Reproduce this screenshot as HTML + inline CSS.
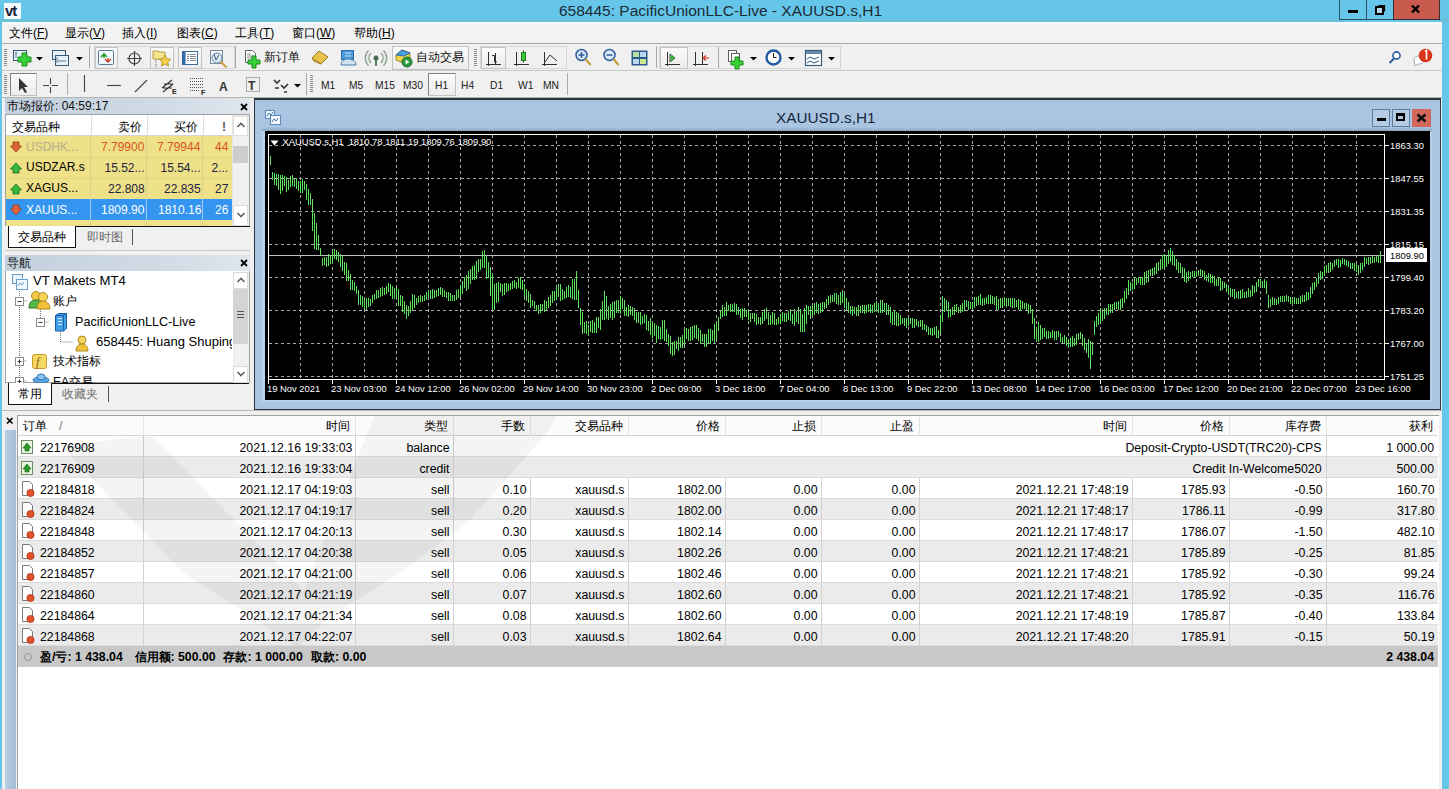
<!DOCTYPE html>
<html><head><meta charset="utf-8">
<style>
*{box-sizing:border-box}
html,body{margin:0;padding:0}
body{width:1449px;height:789px;overflow:hidden;position:relative;background:#f0f0f0;font-family:"Liberation Sans",sans-serif;font-size:12px;color:#000}
.a{position:absolute}
.ct{position:absolute;color:#fff;font-size:9.4px;line-height:12px;white-space:nowrap}
.t{position:absolute;white-space:nowrap;line-height:14px}
</style></head><body>
<!-- title bar -->
<div class="a" style="left:0;top:0;width:1449px;height:22px;background:#66c6ea"></div>
<div class="a" style="left:0;top:22px;width:2px;height:767px;background:#66c6ea"></div>
<div class="a" style="left:1442px;top:22px;width:7px;height:767px;background:#66c6ea"></div>
<div class="a" style="left:4px;top:3px;width:17px;height:16px;background:#f4fbff"></div>
<div class="t" style="left:5px;top:3.5px;font-weight:bold;font-size:15px;color:#1a1f3a;letter-spacing:-1px">vt</div>
<div class="t" style="left:559px;top:2px;font-size:15.5px;line-height:17px;color:#1d2b36">658445: PacificUnionLLC-Live - XAUUSD.s,H1</div>
<div class="a" style="left:1339px;top:0;width:28px;height:20px;border:1px solid #2a4d63;border-top:none"></div>
<div class="a" style="left:1367px;top:0;width:27px;height:20px;border:1px solid #2a4d63;border-top:none;border-left:none"></div>
<div class="a" style="left:1393px;top:0;width:47px;height:20px;background:#c85a4d;border:1px solid #3a3030;border-top:none"></div>
<div class="a" style="left:1348px;top:10px;width:10px;height:3px;background:#000"></div>
<svg class="a" style="left:1339px;top:0" width="102" height="22">
<path d="M39.5 5.5h6v6" fill="none" stroke="#000" stroke-width="1.2"/>
<rect x="37" y="7" width="7" height="7" fill="#b8dcea" stroke="#000" stroke-width="2"/>
<path d="M73 5.5l7 7M80 5.5l-7 7" stroke="#000" stroke-width="2.4"/>
</svg>

<!-- menu -->
<div class="a" style="left:2px;top:22px;width:1440px;height:21px;background:#f2f2f2"></div>
<div class="a" style="left:2px;top:43px;width:1440px;height:1px;background:#a9a9a9"></div>
<div class="a" style="left:2px;top:44px;width:1440px;height:1px;background:#fff"></div>
<div class="a" style="left:0;top:19px;width:1339px;height:3px;background:#6bc2d6"></div>
<div class="a" style="left:1440px;top:19px;width:9px;height:3px;background:#6bc2d6"></div>
<div class="a" style="left:2px;top:22px;width:1440px;height:2px;background:#f6fbfd"></div>
<div class="t" style="left:9px;top:26px">文件(<u>F</u>)</div>
<div class="t" style="left:65px;top:26px">显示(<u>V</u>)</div>
<div class="t" style="left:122px;top:26px">插入(<u>I</u>)</div>
<div class="t" style="left:177px;top:26px">图表(<u>C</u>)</div>
<div class="t" style="left:235px;top:26px">工具(<u>T</u>)</div>
<div class="t" style="left:292px;top:26px">窗口(<u>W</u>)</div>
<div class="t" style="left:354px;top:26px">帮助(<u>H</u>)</div>
<!-- toolbar rows -->
<div class="a" style="left:2px;top:44px;width:1440px;height:26px;background:#f0f0f0"></div>
<div class="a" style="left:2px;top:70px;width:1440px;height:1px;background:#c8c8c8"></div>
<div class="a" style="left:2px;top:71px;width:1440px;height:26px;background:#f0f0f0"></div>
<div class="a" style="left:2px;top:97px;width:1440px;height:1px;background:#b4b4b4"></div>

<svg class="a" style="left:0;top:0" width="1449" height="98">
<defs>
<linearGradient id="gbtn" x1="0" y1="0" x2="0" y2="1"><stop offset="0" stop-color="#fbfbfb"/><stop offset="1" stop-color="#ececec"/></linearGradient>
</defs>
<!-- grips -->
<g stroke="#8a8a8a" stroke-width="1">
<path d="M4 49.5h3M4 51.5h3M4 53.5h3M4 55.5h3M4 57.5h3M4 59.5h3M4 61.5h3M4 63.5h3M4 65.5h3"/>
<path d="M4 75.5h3M4 77.5h3M4 79.5h3M4 81.5h3M4 83.5h3M4 85.5h3M4 87.5h3M4 89.5h3M4 91.5h3M4 93.5h3"/>
<path d="M474 49.5h3M474 51.5h3M474 53.5h3M474 55.5h3M474 57.5h3M474 59.5h3M474 61.5h3M474 63.5h3M474 65.5h3"/>
<path d="M310 75.5h3M310 77.5h3M310 79.5h3M310 81.5h3M310 83.5h3M310 85.5h3M310 87.5h3M310 89.5h3M310 91.5h3"/>
</g>
<!-- separators -->
<g stroke="#a8a8a8">
<path d="M89.5 46V68M235.5 46V68M566.5 46V68M656.5 46V68M718.5 46V68M67.5 73V95M306.5 73V95M567.5 73V95M840.5 46V69"/>
</g>
<!-- group borders (light) -->
<g fill="none" stroke="#d6d6d6">
<rect x="94.5" y="46.5" width="140" height="22"/>
<rect x="480.5" y="46.5" width="86" height="22"/>
<rect x="659.5" y="46.5" width="181" height="22"/>
</g>
<!-- active buttons -->
<g fill="url(#gbtn)" stroke="#c2c2c2">
<rect x="95.5" y="47.5" width="22" height="21"/>
<rect x="150.5" y="47.5" width="23" height="21"/>
<rect x="178.5" y="47.5" width="23" height="21"/>
<rect x="392.5" y="46.5" width="76" height="23"/>
<rect x="481.5" y="47.5" width="24" height="21"/>
<rect x="660.5" y="47.5" width="27" height="21"/>
<rect x="10.5" y="73.5" width="26" height="22"/>
<rect x="428.5" y="73.5" width="27" height="22"/>
</g>
<g stroke="#808080" fill="none"><path d="M10.5 95.5V73.5H36.5M428.5 95.5V73.5H455.5"/></g>
<!-- new chart -->
<rect x="13.5" y="50.5" width="13" height="10" fill="#e6f0f8" stroke="#3a5a78"/>
<path d="M16 52v6M15 53h2" stroke="#5a7a98"/>
<path d="M22 53h5v4h4v5h-4v4h-5v-4h-4v-5h4z" fill="#38d038" stroke="#1a8a1a"/>
<path d="M36 57h7l-3.5 3.5z" fill="#000"/>
<!-- profiles -->
<rect x="52.5" y="50.5" width="13" height="9" fill="#e6f0f8" stroke="#3a5a78"/>
<rect x="55.5" y="55.5" width="13" height="10" fill="#e6f0f8" stroke="#3a5a78"/>
<path d="M57 57v6M58 61h8" stroke="#5a7a98"/>
<path d="M76 57h7l-3.5 3.5z" fill="#000"/>
<!-- market watch -->
<rect x="98.5" y="50.5" width="15" height="14" rx="1" fill="#f0f8ff" stroke="#5a7898"/>
<path d="M101 57l3-3 3 3M104 54v4" stroke="#2a9a2a" stroke-width="1.6" fill="none"/>
<path d="M105 59l3 3 3-3M108 62v-4" stroke="#d04030" stroke-width="1.4" fill="none"/>
<!-- crosshair -->
<circle cx="134.5" cy="58.5" r="5.5" fill="none" stroke="#404040" stroke-width="1.2"/>
<path d="M134.5 51V66M127 58.5H142" stroke="#404040" stroke-width="1.2"/>
<!-- navigator folder star -->
<path d="M153 51h5l1 1h6v7h-12z" fill="#f5e58a" stroke="#b09a40"/>
<path d="M165 55l1.8 3.8 4 .5-3 2.8.8 4-3.6-2-3.6 2 .8-4-3-2.8 4-.5z" fill="#f5d24a" stroke="#b08a20" stroke-width="0.8"/>
<path d="M156 60v7" stroke="#555" stroke-dasharray="1,1"/>
<!-- terminal -->
<rect x="182.5" y="51.5" width="15" height="13" fill="#fff" stroke="#3a6a9a"/>
<rect x="182.5" y="51.5" width="3" height="13" fill="#2f6aa8"/>
<path d="M187 54.5h2M187 56.5h2M187 58.5h2M187 60.5h2M190 54.5h6M190 56.5h6M190 58.5h6M190 60.5h6" stroke="#5a6a7a" stroke-width="0.8"/>
<!-- tester -->
<rect x="210.5" y="50.5" width="12" height="13" fill="#f6f9fc" stroke="#7a8a9a"/>
<circle cx="217" cy="58" r="5" fill="#dbe8f5" stroke="#6a8aa8"/>
<path d="M214 54l2 6 3-5" stroke="#4a5a7a" fill="none"/>
<path d="M220.5 61.5l6 6" stroke="#d0a040" stroke-width="2"/>
<!-- new order -->
<path d="M245.5 50.5h7l3 3v9h-10z" fill="#fff" stroke="#606060"/>
<path d="M247 54h4M247 56h6M247 58h6" stroke="#909090"/>
<path d="M252 56h4v4h4v4h-4v4h-4v-4h-4v-4h4z" fill="#38d038" stroke="#1a8a1a"/>
<!-- metaeditor -->
<path d="M312 58l7-7 9 6-7 7z" fill="#e8c24a" stroke="#9a7a20"/>
<path d="M312 58l2 3 7 3" stroke="#9a7a20" fill="#d4a830"/>
<!-- person blue -->
<rect x="341.5" y="50.5" width="12" height="9" fill="#4a98d8" stroke="#2a6aa8"/>
<path d="M341 65c0-4 3-6 7-6s8 2 8 6z" fill="#cfe2f2" stroke="#4a78a8"/>
<path d="M345 53h6M345 56h6" stroke="#cfe8ff"/>
<!-- signals -->
<circle cx="376" cy="58" r="2.5" fill="#4a6a5a"/>
<path d="M371 53a7 7 0 0 0 0 10M381 53a7 7 0 0 1 0 10M368.5 50.5a10.5 10.5 0 0 0 0 15M383.5 50.5a10.5 10.5 0 0 1 0 15" stroke="#8aa08a" stroke-width="1.3" fill="none"/>
<path d="M376 60v6" stroke="#4a8a5a" stroke-width="2"/>
<!-- auto trading -->
<path d="M396 55l6-5 8 3v6l-6 4-8-3z" fill="#f2d54a" stroke="#a08a20"/>
<path d="M396 55l6-5 8 3-6 3z" fill="#4aa0d8" stroke="#2a6aa8"/>
<circle cx="407" cy="62" r="5" fill="#2a9a3a" stroke="#1a6a2a"/>
<path d="M405.5 59.5v5l4-2.5z" fill="#fff"/>
<!-- bar chart -->
<path d="M488.5 52v14M486 64.5h15M492 55.5h2.5V62H497M495.5 53v11" stroke="#303030" fill="none"/>
<!-- candles -->
<path d="M516.5 52v14M514 64.5h15" stroke="#303030" fill="none"/>
<path d="M523.5 50.5v12" stroke="#303030"/>
<rect x="521.5" y="52.5" width="4" height="8" fill="#38c838" stroke="#1a7a1a"/>
<!-- line chart -->
<path d="M544.5 52v14M542 64.5h15M545 62l5-7 7 6" stroke="#303030" fill="none"/>
<!-- zoom in/out -->
<circle cx="581.5" cy="55" r="5.5" fill="#dcecf8" stroke="#2a5a9a" stroke-width="1.5"/>
<path d="M578.5 55h6M581.5 52v6" stroke="#2a5a9a" stroke-width="1.5"/>
<path d="M585.5 59l5 6" stroke="#c8a040" stroke-width="2.2"/>
<circle cx="609.5" cy="55" r="5.5" fill="#dcecf8" stroke="#2a5a9a" stroke-width="1.5"/>
<path d="M606.5 55h6" stroke="#2a5a9a" stroke-width="1.5"/>
<path d="M613.5 59l5 6" stroke="#c8a040" stroke-width="2.2"/>
<!-- tile -->
<rect x="631.5" y="50.5" width="16" height="15" fill="#2a5a8a"/>
<rect x="633" y="52" width="6" height="5" fill="#b8e0a0"/><rect x="640" y="52" width="6" height="5" fill="#b8d8f0"/>
<rect x="633" y="59" width="6" height="5" fill="#b8d8f0"/><rect x="640" y="59" width="6" height="5" fill="#d0e890"/>
<!-- autoscroll -->
<path d="M667.5 52v14M665 64.5h15M670 54v8l5-4z" stroke="#303030" fill="none"/>
<path d="M670.5 54.5v7l4.5-3.5z" fill="#38b838"/>
<!-- chart shift -->
<path d="M695.5 52v14M693 64.5h15M702.5 52v12" stroke="#303030" fill="none"/>
<path d="M709 58h-5M706 55.5l-3 2.5 3 2.5" stroke="#c83020" stroke-width="1.2" fill="none"/>
<!-- indicators -->
<rect x="728.5" y="50.5" width="8" height="11" fill="#fff" stroke="#606060"/>
<rect x="731.5" y="53.5" width="8" height="11" fill="#fff" stroke="#606060"/>
<path d="M735 57h4v4h4v4h-4v4h-4v-4h-4v-4h4z" fill="#38d038" stroke="#1a8a1a"/>
<path d="M750 57h7l-3.5 3.5z" fill="#000"/>
<!-- clock -->
<circle cx="773.5" cy="57.5" r="7" fill="#fff" stroke="#1f5aa0" stroke-width="2.4"/>
<path d="M773.5 53v4.5h3" stroke="#222" fill="none"/>
<path d="M788 57h7l-3.5 3.5z" fill="#000"/>
<!-- templates -->
<rect x="805.5" y="50.5" width="16" height="15" fill="#fff" stroke="#3a5a7a" stroke-width="1.2"/>
<rect x="806" y="51" width="15" height="3" fill="#6a8aaa"/>
<path d="M807 59l3-2 4 2 5-2M807 63l3-2 4 2 5-2" stroke="#2a5a8a" fill="none"/>
<path d="M828 57h7l-3.5 3.5z" fill="#000"/>
<!-- search + notifications -->
<circle cx="1396.5" cy="55.5" r="3.6" fill="#fff" stroke="#2a5aa8" stroke-width="1.6"/>
<path d="M1394 58.5l-4.5 4.5" stroke="#2a5aa8" stroke-width="2"/>
<path d="M1414 60a5 4 0 1 1 4 4l-3 2z" fill="#fff" stroke="#9aaaba"/>
<circle cx="1425.5" cy="55.5" r="6.8" fill="#d8351a"/>
<path d="M1425 51.5l1.5-1v9" stroke="#fff" stroke-width="1.6" fill="none"/>
<!-- row 2 tools -->
<path d="M19 78v13l3-3 3 5 2-1-3-5h4z" fill="#333"/>
<path d="M50.5 78V84M50.5 87V93M43 85.5H49M52 85.5H58" stroke="#444" stroke-width="1.1"/>
<path d="M84.5 75V92" stroke="#444" stroke-width="1.1"/>
<path d="M107 85.5H121" stroke="#444" stroke-width="1.1"/>
<path d="M135 92l12-12" stroke="#444" stroke-width="1.1"/>
<path d="M162 88l10-8M163 92l10-8M164 84h9M163 88h9" stroke="#333" stroke-width="1.2"/>
<text x="172" y="94" font-size="7" font-family="Liberation Sans" font-weight="bold" fill="#222">E</text>
<g stroke="#555" stroke-dasharray="1,1"><path d="M190 78.5h13M190 81.5h13M190 84.5h13M190 87.5h13M190 90.5h10"/></g>
<text x="201" y="95" font-size="7" font-family="Liberation Sans" font-weight="bold" fill="#222">F</text>
<text x="219" y="91" font-size="12" font-family="Liberation Sans" font-weight="bold" fill="#333">A</text>
<rect x="246.5" y="77.5" width="13" height="14" fill="none" stroke="#666" stroke-dasharray="1,1"/>
<text x="248" y="90" font-size="12" font-family="Liberation Sans" font-weight="bold" fill="#333">T</text>
<path d="M274 80l3 3 3-3M281 85l3 3 4-4" stroke="#333" stroke-width="1.6" fill="none"/>
<path d="M275 88h4M284 92h3" stroke="#333" stroke-width="1.5"/>
<path d="M294 84h7l-3.5 3.5z" fill="#000"/>
</svg>
<div class="t" style="left:264px;top:50px;font-size:12px;color:#111">新订单</div>
<div class="t" style="left:416px;top:50px;font-size:12px;color:#111">自动交易</div>
<div class="t" style="left:321px;top:79px;font-size:10.3px;color:#222">M1</div>
<div class="t" style="left:349px;top:79px;font-size:10.3px;color:#222">M5</div>
<div class="t" style="left:375px;top:79px;font-size:10.3px;color:#222">M15</div>
<div class="t" style="left:403px;top:79px;font-size:10.3px;color:#222">M30</div>
<div class="t" style="left:435px;top:79px;font-size:10.3px;color:#222">H1</div>
<div class="t" style="left:461px;top:79px;font-size:10.3px;color:#222">H4</div>
<div class="t" style="left:490px;top:79px;font-size:10.3px;color:#222">D1</div>
<div class="t" style="left:518px;top:79px;font-size:10.3px;color:#222">W1</div>
<div class="t" style="left:543px;top:79px;font-size:10.3px;color:#222">MN</div>


<!-- market watch -->
<div class="a" style="left:5px;top:98px;width:245px;height:16px;background:linear-gradient(90deg,#c3d0dd 0%,#cfdae5 60%,#dfe6ed 100%)"></div>
<div class="t" style="left:7px;top:99px;font-size:12px;line-height:14px;color:#111">市场报价: 04:59:17</div>
<svg class="a" style="left:240px;top:103px" width="8" height="8"><path d="M1 1l6 6M7 1L1 7" stroke="#000" stroke-width="1.8"/></svg>
<div class="a" style="left:5px;top:114px;width:245px;height:113px;background:#fff;border:1px solid #a0a0a0"></div>
<div class="a" style="left:6px;top:115px;width:226px;height:21px;background:#fff;border-bottom:1px solid #d4d4d4"></div>
<div class="a" style="left:91px;top:115px;width:1px;height:21px;background:#e0e0e0"></div>
<div class="a" style="left:147px;top:115px;width:1px;height:21px;background:#e0e0e0"></div>
<div class="a" style="left:203px;top:115px;width:1px;height:21px;background:#e0e0e0"></div>
<div class="t" style="left:12px;top:119.5px">交易品种</div>
<div class="t" style="left:118px;top:119.5px">卖价</div>
<div class="t" style="left:174px;top:119.5px">买价</div>
<div class="t" style="left:222px;top:119.5px;color:#555;font-weight:bold">!</div>
<div class="a" style="left:6px;top:136px;width:226px;height:63px;background:#efe187"></div>
<div class="a" style="left:6px;top:220px;width:226px;height:6px;background:#efe187"></div>
<div class="a" style="left:6px;top:157px;width:226px;height:1px;background:#e2d489"></div>
<div class="a" style="left:6px;top:178px;width:226px;height:1px;background:#e2d489"></div>

<div class="a" style="left:90px;top:136px;width:1px;height:90px;background:#d9cf90"></div>
<div class="a" style="left:146px;top:136px;width:1px;height:90px;background:#d9cf90"></div>
<div class="a" style="left:202px;top:136px;width:1px;height:90px;background:#d9cf90"></div>
<div class="a" style="left:6px;top:199px;width:226px;height:21px;background:#3395ef"></div>
<div class="a" style="left:90px;top:199px;width:1px;height:21px;background:#9ccaf5"></div>
<div class="a" style="left:146px;top:199px;width:1px;height:21px;background:#9ccaf5"></div>
<div class="a" style="left:202px;top:199px;width:1px;height:21px;background:#9ccaf5"></div>
<!-- rows -->
<svg class="a" style="left:10px;top:141px" width="12" height="12"><path d="M3 1h6v4h2.5L6 11 0.5 5H3z" fill="#e2633a" stroke="#9a3a1a" stroke-width="0.8"/></svg>
<div class="t" style="left:26px;top:140px;color:#b3ad8e">USDHK...</div>
<div class="t" style="left:101px;top:140px;color:#d9531c">7.79900</div>
<div class="t" style="left:157px;top:140px;color:#d9531c">7.79944</div>
<div class="t" style="left:215px;top:140px;color:#d9531c">44</div>
<svg class="a" style="left:10px;top:162px" width="12" height="12"><path d="M3 11h6V7h2.5L6 1 0.5 7H3z" fill="#36b83a" stroke="#1a6a1a" stroke-width="0.8"/></svg>
<div class="t" style="left:26px;top:160px">USDZAR.s</div>
<div class="t" style="left:104.5px;top:161px;color:#232345">15.52...</div>
<div class="t" style="left:160.5px;top:161px;color:#232345">15.54...</div>
<div class="t" style="left:211.5px;top:161px;color:#232345">2...</div>
<svg class="a" style="left:10px;top:183px" width="12" height="12"><path d="M3 11h6V7h2.5L6 1 0.5 7H3z" fill="#36b83a" stroke="#1a6a1a" stroke-width="0.8"/></svg>
<div class="t" style="left:26px;top:181px">XAGUS...</div>
<div class="t" style="left:108px;top:182px;color:#232345">22.808</div>
<div class="t" style="left:164px;top:182px;color:#232345">22.835</div>
<div class="t" style="left:215px;top:182px;color:#232345">27</div>
<svg class="a" style="left:10px;top:204px" width="12" height="12"><path d="M3 1h6v4h2.5L6 11 0.5 5H3z" fill="#e2633a" stroke="#9a3a1a" stroke-width="0.8"/></svg>
<div class="t" style="left:26px;top:203px;color:#fff">XAUUS...</div>
<div class="t" style="left:101px;top:203px;color:#fff">1809.90</div>
<div class="t" style="left:158px;top:203px;color:#fff">1810.16</div>
<div class="t" style="left:215px;top:203px;color:#fff">26</div>
<!-- scrollbar -->
<div class="a" style="left:232px;top:115px;width:17px;height:111px;background:#f0f0f0;border-left:1px solid #e6e6e6"></div>
<div class="a" style="left:233px;top:116px;width:15px;height:20px;background:#fff;border:1px solid #dcdcdc"></div>
<svg class="a" style="left:236px;top:120px" width="10" height="10"><path d="M1.5 7L5 3.5 8.5 7" stroke="#606060" stroke-width="1.6" fill="none"/></svg>
<div class="a" style="left:233px;top:146px;width:15px;height:17px;background:#cdcdcd"></div>
<div class="a" style="left:233px;top:205px;width:15px;height:21px;background:#fff;border:1px solid #dcdcdc"></div>
<svg class="a" style="left:236px;top:210px" width="10" height="10"><path d="M1.5 3L5 6.5 8.5 3" stroke="#606060" stroke-width="1.6" fill="none"/></svg>
<!-- tabs -->
<div class="a" style="left:5px;top:226px;width:245px;height:24px;background:#f0f0f0"></div>
<div class="a" style="left:75px;top:226px;width:175px;height:1px;background:#111"></div>
<div class="a" style="left:8px;top:226px;width:68px;height:22px;background:#fff;border:1px solid #111;border-top:none"></div>
<div class="t" style="left:18px;top:230px">交易品种</div>
<div class="t" style="left:87px;top:230px;color:#6a6a6a">即时图</div>
<div class="a" style="left:132px;top:229px;width:1px;height:16px;background:#555"></div>
<div class="a" style="left:5px;top:250px;width:245px;height:1px;background:#c9c9c9"></div>

<!-- navigator -->
<div class="a" style="left:5px;top:255px;width:245px;height:16px;background:linear-gradient(90deg,#c3d0dd 0%,#cfdae5 60%,#dfe6ed 100%)"></div>
<div class="t" style="left:7px;top:256px;font-size:12px;line-height:14px;color:#111">导航</div>
<svg class="a" style="left:240px;top:259px" width="8" height="8"><path d="M1 1l6 6M7 1L1 7" stroke="#000" stroke-width="1.8"/></svg>
<div class="a" style="left:5px;top:271px;width:245px;height:112px;background:#fff;border:1px solid #a0a0a0;border-top:none"></div>
<div class="a" style="left:233px;top:272px;width:16px;height:111px;background:#f0f0f0"></div>
<div class="a" style="left:233px;top:272px;width:15px;height:17px;background:#fff;border:1px solid #dcdcdc"></div>
<svg class="a" style="left:236px;top:275px" width="10" height="10"><path d="M1.5 7L5 3.5 8.5 7" stroke="#606060" stroke-width="1.6" fill="none"/></svg>
<div class="a" style="left:233px;top:289px;width:15px;height:55px;background:#d4d4d4"></div>
<div class="a" style="left:237px;top:311px;width:7px;height:1px;background:#555"></div>
<div class="a" style="left:237px;top:314px;width:7px;height:1px;background:#555"></div>
<div class="a" style="left:237px;top:317px;width:7px;height:1px;background:#555"></div>
<div class="a" style="left:233px;top:366px;width:15px;height:17px;background:#fff;border:1px solid #dcdcdc"></div>
<svg class="a" style="left:236px;top:369px" width="10" height="10"><path d="M1.5 3L5 6.5 8.5 3" stroke="#606060" stroke-width="1.6" fill="none"/></svg>
<!-- tree -->
<svg class="a" style="left:5px;top:271px" width="228" height="112">
<g stroke="#707070" stroke-dasharray="1,1" fill="none">
<path d="M14.5 18V112M14.5 30H22M35.5 38V54M35.5 51H44M55.5 58V71M55.5 71H68M14.5 90H22M14.5 110H22"/>
</g>
<rect x="10.5" y="26.5" width="8" height="8" fill="#fff" stroke="#8c8c8c"/><path d="M12.5 30.5h4" stroke="#333"/>
<rect x="31.5" y="47.5" width="8" height="8" fill="#fff" stroke="#8c8c8c"/><path d="M33.5 51.5h4" stroke="#333"/>
<rect x="10.5" y="86.5" width="8" height="8" fill="#fff" stroke="#8c8c8c"/><path d="M12.5 90.5h4M14.5 88.5v4" stroke="#333"/>
<rect x="10.5" y="106.5" width="8" height="8" fill="#fff" stroke="#8c8c8c"/><path d="M12.5 110.5h4M14.5 108.5v4" stroke="#333"/>
<!-- VT icon -->
<rect x="7.5" y="3.5" width="10" height="9" fill="#e9f3fb" stroke="#6aa0cc"/>
<rect x="11.5" y="8.5" width="11" height="10" fill="#f3f9ff" stroke="#6aa0cc"/>
<path d="M13 15l2-3 2 2 2-3" stroke="#6aa0cc" fill="none"/>
<!-- accounts icon -->
<circle cx="31" cy="25" r="4.5" fill="#f2c94a" stroke="#b08a20"/>
<path d="M24 37c0-6 3-8 7-8s7 2 7 8z" fill="#52b848" stroke="#2a7a2a"/>
<circle cx="38" cy="26" r="4.5" fill="#f5d35a" stroke="#b08a20"/>
<path d="M32 38c0-6 3-8 6-8s7 2 7 8z" fill="#f0c23a" stroke="#b08a20"/>
<!-- server icon -->
<path d="M50.5 44.5l3-2h8v15l-3 2.5h-8z" fill="#3f9ee6" stroke="#1f5f9f"/>
<path d="M50.5 44.5h8v15M58.5 44.5l3-2" fill="none" stroke="#1f5f9f"/>
<path d="M53 47.5h4M53 50.5h4M53 53.5h4" stroke="#d6ecff"/>
<!-- person icon -->
<circle cx="77" cy="69" r="4" fill="#f5d35a" stroke="#b08a20"/>
<path d="M71 80c0-5 3-7 6-7s6 2 6 7z" fill="#f0c23a" stroke="#b08a20"/>
<!-- indicators icon -->
<rect x="27.5" y="83.5" width="14" height="14" rx="2" fill="#f6d860" stroke="#c39a2a"/>
<text x="31" y="95" font-family="Liberation Serif" font-style="italic" font-size="12" fill="#8a5a10">f</text>
<!-- EA icon -->
<ellipse cx="36" cy="109" rx="8" ry="3" fill="#5aa8e6" stroke="#2f6fb0"/><ellipse cx="36" cy="106" rx="4" ry="3" fill="#8cc8f2" stroke="#2f6fb0"/>
</svg>
<div class="t" style="left:33px;top:274px;font-size:13.2px">VT Makets MT4</div>
<div class="t" style="left:53px;top:294px">账户</div>
<div class="t" style="left:75px;top:315px;font-size:12.6px">PacificUnionLLC-Live</div>
<div class="a" style="left:96px;top:334px;width:136px;height:16px;overflow:hidden"><div class="t" style="left:0;top:1px;font-size:13px">658445: Huang Shuping</div></div>
<div class="t" style="left:53px;top:354px">技术指标</div>
<div class="a" style="left:53px;top:374px;width:60px;height:9px;overflow:hidden"><div class="t" style="left:0;top:1px">EA交易</div></div>
<!-- nav tabs -->
<div class="a" style="left:5px;top:383px;width:245px;height:27px;background:#f0f0f0"></div>
<div class="a" style="left:51px;top:383px;width:198px;height:1px;background:#111"></div>
<div class="a" style="left:8px;top:383px;width:44px;height:22px;background:#fff;border:1px solid #111;border-top:none"></div>
<div class="t" style="left:18px;top:387px">常用</div>
<div class="t" style="left:62px;top:387px;color:#6a6a6a">收藏夹</div>
<div class="a" style="left:108px;top:386px;width:1px;height:16px;background:#555"></div>
<div class="a" style="left:2px;top:410px;width:1440px;height:1px;background:#b8b8b8"></div>


<div class="a" style="left:254px;top:98px;width:1187px;height:312px;background:#a9c5e1;border:1px solid #2d3640;border-top:2px solid #2d3640"></div>
<div class="a" style="left:262px;top:130px;width:1170px;height:272px;background:#b9d1e8"></div>
<div class="t" style="left:776px;top:109px;font-size:15.3px;line-height:18px;color:#16263a">XAUUSD.s,H1</div>
<svg class="a" style="left:264px;top:109px" width="20" height="18" viewBox="0 0 20 18">
<rect x="1.5" y="1.5" width="9" height="8" fill="#e8f2fc" stroke="#5d8ab8"/>
<rect x="6.5" y="6.5" width="10" height="9" fill="#f4f9ff" stroke="#5d8ab8"/>
<path d="M3 7l2-3 2 2 2-3M8 13l2-3 2 2 2-3" stroke="#4a78a8" fill="none"/>
</svg>
<div class="a" style="left:1372px;top:109px;width:18px;height:18px;border:1px solid #5f7c99;background:#b3cbe3"></div>
<div class="a" style="left:1377px;top:118px;width:9px;height:3px;background:#000"></div>
<div class="a" style="left:1392px;top:109px;width:18px;height:18px;border:1px solid #5f7c99;background:#b3cbe3"></div>
<div class="a" style="left:1396px;top:113px;width:9px;height:8px;border:2px solid #000;border-top-width:3px"></div>
<div class="a" style="left:1412px;top:109px;width:19px;height:18px;background:#d2685a"></div>
<svg class="a" style="left:1412px;top:109px" width="19" height="18"><path d="M5.5 5.5l8 7M13.5 5.5l-8 7" stroke="#111" stroke-width="2.6"/></svg>
<div class="a" style="left:262px;top:127px;width:1170px;height:4px;background:linear-gradient(#a9c5e1,#8ea6be)"></div>

<svg width="1165" height="269" style="position:absolute;left:265px;top:131px" shape-rendering="crispEdges">
<rect x="0" y="0" width="1165" height="269" fill="#000"/>
<line x1="4" y1="14.5" x2="1120" y2="14.5" stroke="#a8a8a8" stroke-width="1" stroke-dasharray="3,3"/>
<line x1="4" y1="47.5" x2="1120" y2="47.5" stroke="#a8a8a8" stroke-width="1" stroke-dasharray="3,3"/>
<line x1="4" y1="80.5" x2="1120" y2="80.5" stroke="#a8a8a8" stroke-width="1" stroke-dasharray="3,3"/>
<line x1="4" y1="113.5" x2="1120" y2="113.5" stroke="#a8a8a8" stroke-width="1" stroke-dasharray="3,3"/>
<line x1="4" y1="146.5" x2="1120" y2="146.5" stroke="#a8a8a8" stroke-width="1" stroke-dasharray="3,3"/>
<line x1="4" y1="179.5" x2="1120" y2="179.5" stroke="#a8a8a8" stroke-width="1" stroke-dasharray="3,3"/>
<line x1="4" y1="212.5" x2="1120" y2="212.5" stroke="#a8a8a8" stroke-width="1" stroke-dasharray="3,3"/>
<line x1="4" y1="245.5" x2="1120" y2="245.5" stroke="#a8a8a8" stroke-width="1" stroke-dasharray="3,3"/>
<line x1="35.5" y1="4" x2="35.5" y2="248" stroke="#a8a8a8" stroke-width="1" stroke-dasharray="3,3"/>
<line x1="67.5" y1="4" x2="67.5" y2="248" stroke="#a8a8a8" stroke-width="1" stroke-dasharray="3,3"/>
<line x1="99.5" y1="4" x2="99.5" y2="248" stroke="#a8a8a8" stroke-width="1" stroke-dasharray="3,3"/>
<line x1="131.5" y1="4" x2="131.5" y2="248" stroke="#a8a8a8" stroke-width="1" stroke-dasharray="3,3"/>
<line x1="163.5" y1="4" x2="163.5" y2="248" stroke="#a8a8a8" stroke-width="1" stroke-dasharray="3,3"/>
<line x1="195.5" y1="4" x2="195.5" y2="248" stroke="#a8a8a8" stroke-width="1" stroke-dasharray="3,3"/>
<line x1="227.5" y1="4" x2="227.5" y2="248" stroke="#a8a8a8" stroke-width="1" stroke-dasharray="3,3"/>
<line x1="259.5" y1="4" x2="259.5" y2="248" stroke="#a8a8a8" stroke-width="1" stroke-dasharray="3,3"/>
<line x1="291.5" y1="4" x2="291.5" y2="248" stroke="#a8a8a8" stroke-width="1" stroke-dasharray="3,3"/>
<line x1="323.5" y1="4" x2="323.5" y2="248" stroke="#a8a8a8" stroke-width="1" stroke-dasharray="3,3"/>
<line x1="355.5" y1="4" x2="355.5" y2="248" stroke="#a8a8a8" stroke-width="1" stroke-dasharray="3,3"/>
<line x1="387.5" y1="4" x2="387.5" y2="248" stroke="#a8a8a8" stroke-width="1" stroke-dasharray="3,3"/>
<line x1="419.5" y1="4" x2="419.5" y2="248" stroke="#a8a8a8" stroke-width="1" stroke-dasharray="3,3"/>
<line x1="451.5" y1="4" x2="451.5" y2="248" stroke="#a8a8a8" stroke-width="1" stroke-dasharray="3,3"/>
<line x1="483.5" y1="4" x2="483.5" y2="248" stroke="#a8a8a8" stroke-width="1" stroke-dasharray="3,3"/>
<line x1="515.5" y1="4" x2="515.5" y2="248" stroke="#a8a8a8" stroke-width="1" stroke-dasharray="3,3"/>
<line x1="547.5" y1="4" x2="547.5" y2="248" stroke="#a8a8a8" stroke-width="1" stroke-dasharray="3,3"/>
<line x1="579.5" y1="4" x2="579.5" y2="248" stroke="#a8a8a8" stroke-width="1" stroke-dasharray="3,3"/>
<line x1="611.5" y1="4" x2="611.5" y2="248" stroke="#a8a8a8" stroke-width="1" stroke-dasharray="3,3"/>
<line x1="643.5" y1="4" x2="643.5" y2="248" stroke="#a8a8a8" stroke-width="1" stroke-dasharray="3,3"/>
<line x1="675.5" y1="4" x2="675.5" y2="248" stroke="#a8a8a8" stroke-width="1" stroke-dasharray="3,3"/>
<line x1="707.5" y1="4" x2="707.5" y2="248" stroke="#a8a8a8" stroke-width="1" stroke-dasharray="3,3"/>
<line x1="739.5" y1="4" x2="739.5" y2="248" stroke="#a8a8a8" stroke-width="1" stroke-dasharray="3,3"/>
<line x1="771.5" y1="4" x2="771.5" y2="248" stroke="#a8a8a8" stroke-width="1" stroke-dasharray="3,3"/>
<line x1="803.5" y1="4" x2="803.5" y2="248" stroke="#a8a8a8" stroke-width="1" stroke-dasharray="3,3"/>
<line x1="835.5" y1="4" x2="835.5" y2="248" stroke="#a8a8a8" stroke-width="1" stroke-dasharray="3,3"/>
<line x1="867.5" y1="4" x2="867.5" y2="248" stroke="#a8a8a8" stroke-width="1" stroke-dasharray="3,3"/>
<line x1="899.5" y1="4" x2="899.5" y2="248" stroke="#a8a8a8" stroke-width="1" stroke-dasharray="3,3"/>
<line x1="931.5" y1="4" x2="931.5" y2="248" stroke="#a8a8a8" stroke-width="1" stroke-dasharray="3,3"/>
<line x1="963.5" y1="4" x2="963.5" y2="248" stroke="#a8a8a8" stroke-width="1" stroke-dasharray="3,3"/>
<line x1="995.5" y1="4" x2="995.5" y2="248" stroke="#a8a8a8" stroke-width="1" stroke-dasharray="3,3"/>
<line x1="1027.5" y1="4" x2="1027.5" y2="248" stroke="#a8a8a8" stroke-width="1" stroke-dasharray="3,3"/>
<line x1="1059.5" y1="4" x2="1059.5" y2="248" stroke="#a8a8a8" stroke-width="1" stroke-dasharray="3,3"/>
<line x1="1091.5" y1="4" x2="1091.5" y2="248" stroke="#a8a8a8" stroke-width="1" stroke-dasharray="3,3"/>
<line x1="4" y1="124.5" x2="1120" y2="124.5" stroke="#c0c0c0" stroke-width="1"/>
<path d="M3.5 20V30M5.5 25V34M7.5 41V49M9.5 42V54M11.5 43V55M13.5 43V59M15.5 44V63M17.5 44V60M19.5 45V55M21.5 46V61M23.5 49V59M25.5 45V56M27.5 44V55M29.5 48V56M31.5 47V58M33.5 50V60M35.5 50V62M37.5 48V62M39.5 50V59M41.5 53V69M43.5 58V74M45.5 62V74M47.5 68V100M49.5 82V118M51.5 92V119M53.5 104V119M55.5 117V125M57.5 127V135M59.5 126V134M61.5 126V136M63.5 123V135M65.5 125V133M67.5 119V132M69.5 118V128M71.5 119V129M73.5 121V131M75.5 123V136M77.5 125V140M79.5 131V144M81.5 132V150M83.5 139V150M85.5 143V159M87.5 149V159M89.5 151V160M91.5 155V163M93.5 159V174M95.5 164V174M97.5 165V176M99.5 168V178M101.5 167V179M103.5 167V176M105.5 168V175M107.5 164V172M109.5 163V169M111.5 159V168M113.5 159V167M115.5 157V166M117.5 156V165M119.5 157V164M121.5 155V163M123.5 152V161M125.5 153V165M127.5 155V168M129.5 157V168M131.5 157V167M133.5 158V175M135.5 164V175M137.5 165V181M139.5 170V183M141.5 174V188M143.5 175V185M145.5 170V182M147.5 163V180M149.5 164V177M151.5 167V174M153.5 165V172M155.5 164V171M157.5 165V171M159.5 164V170M161.5 161V169M163.5 159V166M165.5 159V168M167.5 158V168M169.5 159V167M171.5 159V166M173.5 157V165M175.5 156V164M177.5 157V166M179.5 159V166M181.5 161V167M183.5 161V170M185.5 162V170M187.5 164V170M189.5 164V170M191.5 159V169M193.5 158V167M195.5 154V166M197.5 150V163M199.5 146V157M201.5 144V160M203.5 140V158M205.5 138V153M207.5 135V149M209.5 134V149M211.5 130V148M213.5 128V141M215.5 128V139M217.5 120V137M219.5 119V137M221.5 125V148M223.5 131V147M225.5 136V165M227.5 143V178M229.5 153V179M231.5 152V172M233.5 151V171M235.5 152V161M237.5 153V165M239.5 152V164M241.5 152V161M243.5 153V160M245.5 152V159M247.5 150V158M249.5 149V157M251.5 151V158M253.5 147V157M255.5 146V158M257.5 149V159M259.5 153V167M261.5 158V170M263.5 160V172M265.5 163V177M267.5 169V175M269.5 170V178M271.5 174V180M273.5 174V183M275.5 173V182M277.5 173V180M279.5 169V181M281.5 170V180M283.5 166V177M285.5 164V175M287.5 160V172M289.5 160V170M291.5 156V169M293.5 153V166M295.5 153V170M297.5 158V169M299.5 160V168M301.5 156V167M303.5 154V166M305.5 156V167M307.5 148V168M309.5 148V169M311.5 140V169M313.5 159V177M315.5 177V194M317.5 181V203M319.5 191V202M321.5 190V203M323.5 194V204M325.5 190V201M327.5 189V202M329.5 191V202M331.5 186V202M333.5 186V197M335.5 178V199M337.5 170V189M339.5 160V189M341.5 165V188M343.5 175V189M345.5 173V187M347.5 171V189M349.5 170V187M351.5 169V182M353.5 169V182M355.5 165V183M357.5 167V178M359.5 169V185M361.5 176V185M363.5 174V186M365.5 175V184M367.5 176V185M369.5 177V189M371.5 181V192M373.5 181V192M375.5 181V194M377.5 185V193M379.5 183V192M381.5 184V199M383.5 190V200M385.5 187V204M387.5 192V207M389.5 192V205M391.5 194V212M393.5 195V208M395.5 196V209M397.5 189V208M399.5 189V210M401.5 198V211M403.5 203V215M405.5 205V223M407.5 211V225M409.5 210V224M411.5 210V218M413.5 206V220M415.5 206V217M417.5 204V217M419.5 198V214M421.5 197V208M423.5 198V210M425.5 196V210M427.5 195V209M429.5 194V207M431.5 194V208M433.5 197V210M435.5 199V213M437.5 203V211M439.5 203V216M441.5 203V216M443.5 198V213M445.5 198V213M447.5 199V210M449.5 193V213M451.5 191V208M453.5 186V200M455.5 179V188M457.5 174V186M459.5 176V185M461.5 171V185M463.5 174V180M465.5 173V181M467.5 173V181M469.5 172V181M471.5 173V184M473.5 176V184M475.5 178V187M477.5 177V189M479.5 177V186M481.5 179V186M483.5 179V189M485.5 182V191M487.5 182V188M489.5 182V191M491.5 183V194M493.5 186V193M495.5 186V194M497.5 181V193M499.5 178V190M501.5 177V188M503.5 181V194M505.5 184V194M507.5 181V193M509.5 182V194M511.5 188V194M513.5 186V193M515.5 183V193M517.5 181V190M519.5 182V191M521.5 182V191M523.5 180V189M525.5 178V190M527.5 183V193M529.5 178V195M531.5 180V191M533.5 176V193M535.5 178V201M537.5 183V201M539.5 177V201M541.5 174V193M543.5 175V184M545.5 175V188M547.5 175V184M549.5 172V184M551.5 171V182M553.5 173V183M555.5 172V182M557.5 171V181M559.5 171V178M561.5 168V177M563.5 165V174M565.5 164V172M567.5 164V171M569.5 162V171M571.5 162V173M573.5 164V174M575.5 161V174M577.5 159V172M579.5 163V177M581.5 167V179M583.5 171V182M585.5 175V183M587.5 175V185M589.5 176V183M591.5 176V185M593.5 174V185M595.5 175V182M597.5 174V182M599.5 174V183M601.5 174V182M603.5 173V181M605.5 173V182M607.5 174V182M609.5 172V181M611.5 170V180M613.5 172V182M615.5 169V182M617.5 169V182M619.5 172V181M621.5 172V184M623.5 174V184M625.5 176V192M627.5 181V194M629.5 179V194M631.5 181V195M633.5 182V195M635.5 184V194M637.5 187V193M639.5 187V195M641.5 187V197M643.5 187V195M645.5 187V193M647.5 187V197M649.5 188V197M651.5 188V195M653.5 190V196M655.5 189V196M657.5 189V199M659.5 193V199M661.5 194V201M663.5 196V204M665.5 197V204M667.5 197V205M669.5 196V204M671.5 195V207M673.5 199V207M675.5 185V202M677.5 165V191M679.5 167V181M681.5 169V180M683.5 171V187M685.5 178V186M687.5 176V184M689.5 174V184M691.5 173V181M693.5 176V182M695.5 174V182M697.5 172V181M699.5 169V180M701.5 169V176M703.5 170V179M705.5 171V178M707.5 171V178M709.5 166V177M711.5 166V175M713.5 165V174M715.5 163V174M717.5 167V175M719.5 167V174M721.5 166V173M723.5 164V173M725.5 164V173M727.5 165V173M729.5 166V174M731.5 165V179M733.5 168V179M735.5 167V177M737.5 167V177M739.5 166V175M741.5 167V176M743.5 167V175M745.5 167V176M747.5 167V177M749.5 167V177M751.5 169V176M753.5 168V179M755.5 169V180M757.5 170V178M759.5 172V178M761.5 172V179M763.5 173V183M765.5 174V182M767.5 178V193M769.5 187V208M771.5 198V211M773.5 191V211M775.5 194V209M777.5 197V208M779.5 197V206M781.5 200V208M783.5 200V208M785.5 201V207M787.5 199V207M789.5 200V209M791.5 200V209M793.5 200V206M795.5 202V211M797.5 206V212M799.5 204V213M801.5 206V215M803.5 208V216M805.5 207V216M807.5 205V216M809.5 207V215M811.5 203V214M813.5 202V209M815.5 201V208M817.5 203V215M819.5 207V219M821.5 212V222M823.5 208V227M825.5 210V238M827.5 211V224M829.5 190V204M831.5 185V196M833.5 182V194M835.5 177V191M837.5 178V190M839.5 177V188M841.5 177V184M843.5 173V184M845.5 173V182M847.5 173V182M849.5 171V179M851.5 171V178M853.5 170V179M855.5 168V179M857.5 167V177M859.5 160V172M861.5 157V168M863.5 149V164M865.5 151V160M867.5 152V159M869.5 147V158M871.5 147V154M873.5 146V152M875.5 146V154M877.5 146V154M879.5 141V154M881.5 140V152M883.5 139V151M885.5 138V145M887.5 137V145M889.5 136V144M891.5 132V143M893.5 131V140M895.5 128V139M897.5 124V138M899.5 123V137M901.5 124V136M903.5 119V133M905.5 117V131M907.5 120V134M909.5 124V135M911.5 128V139M913.5 131V142M915.5 132V142M917.5 136V147M919.5 137V151M921.5 141V152M923.5 140V150M925.5 141V148M927.5 140V146M929.5 140V147M931.5 140V146M933.5 139V145M935.5 138V145M937.5 139V146M939.5 140V149M941.5 144V150M943.5 142V151M945.5 143V152M947.5 144V152M949.5 145V155M951.5 148V155M953.5 146V155M955.5 147V160M957.5 150V159M959.5 151V157M961.5 153V161M963.5 155V164M965.5 157V166M967.5 158V166M969.5 158V168M971.5 161V167M973.5 160V168M975.5 159V168M977.5 158V167M979.5 161V167M981.5 160V167M983.5 157V166M985.5 159V166M987.5 154V165M989.5 155V162M991.5 151V161M993.5 148V156M995.5 148V155M997.5 150V157M999.5 148V157M1001.5 150V163M1003.5 164V177M1005.5 168V176M1007.5 166V174M1009.5 167V174M1011.5 168V174M1013.5 166V173M1015.5 165V171M1017.5 165V171M1019.5 165V171M1021.5 164V170M1023.5 165V171M1025.5 166V173M1027.5 167V173M1029.5 166V173M1031.5 167V173M1033.5 167V173M1035.5 165V173M1037.5 164V171M1039.5 164V171M1041.5 161V170M1043.5 161V169M1045.5 156V167M1047.5 152V163M1049.5 151V159M1051.5 147V156M1053.5 142V153M1055.5 140V149M1057.5 141V148M1059.5 135V145M1061.5 134V142M1063.5 132V142M1065.5 131V141M1067.5 132V139M1069.5 129V136M1071.5 128V134M1073.5 128V137M1075.5 129V136M1077.5 127V133M1079.5 128V134M1081.5 129V135M1083.5 130V136M1085.5 132V138M1087.5 132V138M1089.5 132V140M1091.5 133V141M1093.5 134V144M1095.5 132V142M1097.5 132V139M1099.5 126V136M1101.5 127V133M1103.5 126V134M1105.5 126V133M1107.5 125V132M1109.5 126V132M1111.5 125V131M1113.5 124V132M1115.5 120V132" stroke="#5ee35e" stroke-width="1" fill="none"/>
<rect x="3.5" y="3.5" width="1116" height="245" fill="none" stroke="#fff" stroke-width="1"/>
<line x1="1120" y1="14.5" x2="1124" y2="14.5" stroke="#fff"/>
<line x1="1120" y1="47.5" x2="1124" y2="47.5" stroke="#fff"/>
<line x1="1120" y1="80.5" x2="1124" y2="80.5" stroke="#fff"/>
<line x1="1120" y1="113.5" x2="1124" y2="113.5" stroke="#fff"/>
<line x1="1120" y1="146.5" x2="1124" y2="146.5" stroke="#fff"/>
<line x1="1120" y1="179.5" x2="1124" y2="179.5" stroke="#fff"/>
<line x1="1120" y1="212.5" x2="1124" y2="212.5" stroke="#fff"/>
<line x1="1120" y1="245.5" x2="1124" y2="245.5" stroke="#fff"/>
<line x1="3.5" y1="248" x2="3.5" y2="253" stroke="#fff"/>
<line x1="67.5" y1="248" x2="67.5" y2="253" stroke="#fff"/>
<line x1="131.5" y1="248" x2="131.5" y2="253" stroke="#fff"/>
<line x1="195.5" y1="248" x2="195.5" y2="253" stroke="#fff"/>
<line x1="259.5" y1="248" x2="259.5" y2="253" stroke="#fff"/>
<line x1="323.5" y1="248" x2="323.5" y2="253" stroke="#fff"/>
<line x1="387.5" y1="248" x2="387.5" y2="253" stroke="#fff"/>
<line x1="451.5" y1="248" x2="451.5" y2="253" stroke="#fff"/>
<line x1="515.5" y1="248" x2="515.5" y2="253" stroke="#fff"/>
<line x1="579.5" y1="248" x2="579.5" y2="253" stroke="#fff"/>
<line x1="643.5" y1="248" x2="643.5" y2="253" stroke="#fff"/>
<line x1="707.5" y1="248" x2="707.5" y2="253" stroke="#fff"/>
<line x1="771.5" y1="248" x2="771.5" y2="253" stroke="#fff"/>
<line x1="835.5" y1="248" x2="835.5" y2="253" stroke="#fff"/>
<line x1="899.5" y1="248" x2="899.5" y2="253" stroke="#fff"/>
<line x1="963.5" y1="248" x2="963.5" y2="253" stroke="#fff"/>
<line x1="1027.5" y1="248" x2="1027.5" y2="253" stroke="#fff"/>
<line x1="1091.5" y1="248" x2="1091.5" y2="253" stroke="#fff"/>
</svg>
<div class="ct" style="left:1390px;top:140px">1863.30</div>
<div class="ct" style="left:1390px;top:173px">1847.55</div>
<div class="ct" style="left:1390px;top:206px">1831.35</div>
<div class="ct" style="left:1390px;top:239px">1815.15</div>
<div class="ct" style="left:1390px;top:272px">1799.40</div>
<div class="ct" style="left:1390px;top:305px">1783.20</div>
<div class="ct" style="left:1390px;top:338px">1767.00</div>
<div class="ct" style="left:1390px;top:371px">1751.25</div>
<div style="position:absolute;left:1386px;top:248px;width:41px;height:14px;background:#fff"></div>
<div class="ct" style="left:1390px;top:250px;color:#000">1809.90</div>
<div class="ct" style="left:267px;top:383px">19 Nov 2021</div>
<div class="ct" style="left:331px;top:383px">23 Nov 03:00</div>
<div class="ct" style="left:395px;top:383px">24 Nov 12:00</div>
<div class="ct" style="left:459px;top:383px">26 Nov 02:00</div>
<div class="ct" style="left:523px;top:383px">29 Nov 14:00</div>
<div class="ct" style="left:587px;top:383px">30 Nov 23:00</div>
<div class="ct" style="left:651px;top:383px">2 Dec 09:00</div>
<div class="ct" style="left:715px;top:383px">3 Dec 18:00</div>
<div class="ct" style="left:779px;top:383px">7 Dec 04:00</div>
<div class="ct" style="left:843px;top:383px">8 Dec 13:00</div>
<div class="ct" style="left:907px;top:383px">9 Dec 22:00</div>
<div class="ct" style="left:971px;top:383px">13 Dec 08:00</div>
<div class="ct" style="left:1035px;top:383px">14 Dec 17:00</div>
<div class="ct" style="left:1099px;top:383px">16 Dec 03:00</div>
<div class="ct" style="left:1163px;top:383px">17 Dec 12:00</div>
<div class="ct" style="left:1227px;top:383px">20 Dec 21:00</div>
<div class="ct" style="left:1291px;top:383px">22 Dec 07:00</div>
<div class="ct" style="left:1355px;top:383px">23 Dec 16:00</div>
<svg class="a" style="left:270px;top:140px" width="9" height="6"><path d="M0.5 0.5h8L4.5 5.5z" fill="#fff"/></svg>
<div class="ct" style="left:282.5px;top:136px">XAUUSD.s,H1&nbsp; 1810.78 1811.19 1809.76 1809.90</div>
<div class="a" style="left:2px;top:411px;width:1440px;height:378px;background:#f0f0f0"></div>
<div class="a" style="left:5px;top:430px;width:11px;height:359px;background:linear-gradient(90deg,#b9cfe4,#a3bdd6)"></div>
<svg class="a" style="left:6px;top:417px" width="8" height="8"><path d="M1 1l5.5 5.5M6.5 1L1 6.5" stroke="#000" stroke-width="1.7"/></svg>
<div class="a" style="left:17px;top:415px;width:1422px;height:374px;background:#fff;border-left:1px solid #a0a0a0;border-top:1px solid #a0a0a0"></div><div style="font-size:12.3px">
<div class="a" style="left:18px;top:416px;width:1420px;height:20px;background:#fbfbfb;border-bottom:1px solid #d5d5d5"></div>
<div class="a" style="left:143px;top:416px;width:1px;height:20px;background:#e3e3e3"></div>
<div class="a" style="left:355px;top:416px;width:1px;height:20px;background:#e3e3e3"></div>
<div class="a" style="left:453px;top:416px;width:1px;height:20px;background:#e3e3e3"></div>
<div class="a" style="left:530px;top:416px;width:1px;height:20px;background:#e3e3e3"></div>
<div class="a" style="left:628px;top:416px;width:1px;height:20px;background:#e3e3e3"></div>
<div class="a" style="left:725px;top:416px;width:1px;height:20px;background:#e3e3e3"></div>
<div class="a" style="left:821px;top:416px;width:1px;height:20px;background:#e3e3e3"></div>
<div class="a" style="left:919px;top:416px;width:1px;height:20px;background:#e3e3e3"></div>
<div class="a" style="left:1132px;top:416px;width:1px;height:20px;background:#e3e3e3"></div>
<div class="a" style="left:1229px;top:416px;width:1px;height:20px;background:#e3e3e3"></div>
<div class="a" style="left:1326px;top:416px;width:1px;height:20px;background:#e3e3e3"></div>
<div class="t" style="left:23px;top:419px">订单</div><div class="t" style="left:59px;top:419px;color:#777">/</div>
<div class="t" style="right:1099.5px;top:419px">时间</div>
<div class="t" style="right:1001.5px;top:419px">类型</div>
<div class="t" style="right:924.5px;top:419px">手数</div>
<div class="t" style="right:826.5px;top:419px">交易品种</div>
<div class="t" style="right:729.5px;top:419px">价格</div>
<div class="t" style="right:633.5px;top:419px">止损</div>
<div class="t" style="right:535.5px;top:419px">止盈</div>
<div class="t" style="right:322.5px;top:419px">时间</div>
<div class="t" style="right:225.5px;top:419px">价格</div>
<div class="t" style="right:128.5px;top:419px">库存费</div>
<div class="t" style="right:16.5px;top:419px">获利</div>
<div class="a" style="left:18px;top:436px;width:1420px;height:21px;background:#ffffff;border-bottom:1px solid #dcdcdc"></div>
<div class="a" style="left:143px;top:436px;width:1px;height:21px;background:#d2d2d2"></div>
<div class="a" style="left:355px;top:436px;width:1px;height:21px;background:#d2d2d2"></div>
<div class="a" style="left:453px;top:436px;width:1px;height:21px;background:#d2d2d2"></div>
<div class="a" style="left:1326px;top:436px;width:1px;height:21px;background:#d2d2d2"></div>
<svg class="a" style="left:21px;top:440px" width="12" height="14"><rect x="0.5" y="0.5" width="11" height="13" fill="#e8f6e0" stroke="#6a8a6a"/><path d="M4 11h4V8h2L6 3 2 8h2z" fill="#2a9a2a" stroke="#145a14" stroke-width="0.6"/></svg>
<div class="t" style="left:40px;top:441px">22176908</div>
<div class="t" style="right:1096.7px;top:441px">2021.12.16 19:33:03</div>
<div class="t" style="right:999.5px;top:441px">balance</div>
<div class="t" style="right:127.5px;top:441px">Deposit-Crypto-USDT(TRC20)-CPS</div>
<div class="t" style="right:15px;top:441px">1 000.00</div>
<div class="a" style="left:18px;top:457px;width:1420px;height:21px;background:#ebebeb;border-bottom:1px solid #dcdcdc"></div>
<div class="a" style="left:143px;top:457px;width:1px;height:21px;background:#d2d2d2"></div>
<div class="a" style="left:355px;top:457px;width:1px;height:21px;background:#d2d2d2"></div>
<div class="a" style="left:453px;top:457px;width:1px;height:21px;background:#d2d2d2"></div>
<div class="a" style="left:1326px;top:457px;width:1px;height:21px;background:#d2d2d2"></div>
<svg class="a" style="left:21px;top:461px" width="12" height="14"><rect x="0.5" y="0.5" width="11" height="13" fill="#e8f6e0" stroke="#6a8a6a"/><path d="M4 11h4V8h2L6 3 2 8h2z" fill="#2a9a2a" stroke="#145a14" stroke-width="0.6"/></svg>
<div class="t" style="left:40px;top:462px">22176909</div>
<div class="t" style="right:1096.7px;top:462px">2021.12.16 19:33:04</div>
<div class="t" style="right:999.5px;top:462px">credit</div>
<div class="t" style="right:127.5px;top:462px">Credit In-Welcome5020</div>
<div class="t" style="right:15px;top:462px">500.00</div>
<div class="a" style="left:18px;top:478px;width:1420px;height:21px;background:#ffffff;border-bottom:1px solid #dcdcdc"></div>
<div class="a" style="left:143px;top:478px;width:1px;height:21px;background:#d2d2d2"></div>
<div class="a" style="left:355px;top:478px;width:1px;height:21px;background:#d2d2d2"></div>
<div class="a" style="left:453px;top:478px;width:1px;height:21px;background:#d2d2d2"></div>
<div class="a" style="left:530px;top:478px;width:1px;height:21px;background:#d2d2d2"></div>
<div class="a" style="left:628px;top:478px;width:1px;height:21px;background:#d2d2d2"></div>
<div class="a" style="left:725px;top:478px;width:1px;height:21px;background:#d2d2d2"></div>
<div class="a" style="left:821px;top:478px;width:1px;height:21px;background:#d2d2d2"></div>
<div class="a" style="left:919px;top:478px;width:1px;height:21px;background:#d2d2d2"></div>
<div class="a" style="left:1132px;top:478px;width:1px;height:21px;background:#d2d2d2"></div>
<div class="a" style="left:1229px;top:478px;width:1px;height:21px;background:#d2d2d2"></div>
<div class="a" style="left:1326px;top:478px;width:1px;height:21px;background:#d2d2d2"></div>
<svg class="a" style="left:21px;top:481px" width="14" height="16"><path d="M1.5 0.5h7l3 3v11h-10z" fill="#fff" stroke="#7a7a7a"/><circle cx="9.5" cy="12" r="3.6" fill="#e0522a" stroke="#a02a10" stroke-width="0.7"/></svg>
<div class="t" style="left:40px;top:483px">22184818</div>
<div class="t" style="right:1096.7px;top:483px">2021.12.17 04:19:03</div>
<div class="t" style="right:999.5px;top:483px">sell</div>
<div class="t" style="right:922.5px;top:483px">0.10</div>
<div class="t" style="right:824.5px;top:483px">xauusd.s</div>
<div class="t" style="right:727.5px;top:483px">1802.00</div>
<div class="t" style="right:631.5px;top:483px">0.00</div>
<div class="t" style="right:533.5px;top:483px">0.00</div>
<div class="t" style="right:320.5px;top:483px">2021.12.21 17:48:19</div>
<div class="t" style="right:223.5px;top:483px">1785.93</div>
<div class="t" style="right:126.5px;top:483px">-0.50</div>
<div class="t" style="right:14.5px;top:483px">160.70</div>
<div class="a" style="left:18px;top:499px;width:1420px;height:21px;background:#ebebeb;border-bottom:1px solid #dcdcdc"></div>
<div class="a" style="left:143px;top:499px;width:1px;height:21px;background:#d2d2d2"></div>
<div class="a" style="left:355px;top:499px;width:1px;height:21px;background:#d2d2d2"></div>
<div class="a" style="left:453px;top:499px;width:1px;height:21px;background:#d2d2d2"></div>
<div class="a" style="left:530px;top:499px;width:1px;height:21px;background:#d2d2d2"></div>
<div class="a" style="left:628px;top:499px;width:1px;height:21px;background:#d2d2d2"></div>
<div class="a" style="left:725px;top:499px;width:1px;height:21px;background:#d2d2d2"></div>
<div class="a" style="left:821px;top:499px;width:1px;height:21px;background:#d2d2d2"></div>
<div class="a" style="left:919px;top:499px;width:1px;height:21px;background:#d2d2d2"></div>
<div class="a" style="left:1132px;top:499px;width:1px;height:21px;background:#d2d2d2"></div>
<div class="a" style="left:1229px;top:499px;width:1px;height:21px;background:#d2d2d2"></div>
<div class="a" style="left:1326px;top:499px;width:1px;height:21px;background:#d2d2d2"></div>
<svg class="a" style="left:21px;top:502px" width="14" height="16"><path d="M1.5 0.5h7l3 3v11h-10z" fill="#fff" stroke="#7a7a7a"/><circle cx="9.5" cy="12" r="3.6" fill="#e0522a" stroke="#a02a10" stroke-width="0.7"/></svg>
<div class="t" style="left:40px;top:504px">22184824</div>
<div class="t" style="right:1096.7px;top:504px">2021.12.17 04:19:17</div>
<div class="t" style="right:999.5px;top:504px">sell</div>
<div class="t" style="right:922.5px;top:504px">0.20</div>
<div class="t" style="right:824.5px;top:504px">xauusd.s</div>
<div class="t" style="right:727.5px;top:504px">1802.00</div>
<div class="t" style="right:631.5px;top:504px">0.00</div>
<div class="t" style="right:533.5px;top:504px">0.00</div>
<div class="t" style="right:320.5px;top:504px">2021.12.21 17:48:17</div>
<div class="t" style="right:223.5px;top:504px">1786.11</div>
<div class="t" style="right:126.5px;top:504px">-0.99</div>
<div class="t" style="right:14.5px;top:504px">317.80</div>
<div class="a" style="left:18px;top:520px;width:1420px;height:21px;background:#ffffff;border-bottom:1px solid #dcdcdc"></div>
<div class="a" style="left:143px;top:520px;width:1px;height:21px;background:#d2d2d2"></div>
<div class="a" style="left:355px;top:520px;width:1px;height:21px;background:#d2d2d2"></div>
<div class="a" style="left:453px;top:520px;width:1px;height:21px;background:#d2d2d2"></div>
<div class="a" style="left:530px;top:520px;width:1px;height:21px;background:#d2d2d2"></div>
<div class="a" style="left:628px;top:520px;width:1px;height:21px;background:#d2d2d2"></div>
<div class="a" style="left:725px;top:520px;width:1px;height:21px;background:#d2d2d2"></div>
<div class="a" style="left:821px;top:520px;width:1px;height:21px;background:#d2d2d2"></div>
<div class="a" style="left:919px;top:520px;width:1px;height:21px;background:#d2d2d2"></div>
<div class="a" style="left:1132px;top:520px;width:1px;height:21px;background:#d2d2d2"></div>
<div class="a" style="left:1229px;top:520px;width:1px;height:21px;background:#d2d2d2"></div>
<div class="a" style="left:1326px;top:520px;width:1px;height:21px;background:#d2d2d2"></div>
<svg class="a" style="left:21px;top:523px" width="14" height="16"><path d="M1.5 0.5h7l3 3v11h-10z" fill="#fff" stroke="#7a7a7a"/><circle cx="9.5" cy="12" r="3.6" fill="#e0522a" stroke="#a02a10" stroke-width="0.7"/></svg>
<div class="t" style="left:40px;top:525px">22184848</div>
<div class="t" style="right:1096.7px;top:525px">2021.12.17 04:20:13</div>
<div class="t" style="right:999.5px;top:525px">sell</div>
<div class="t" style="right:922.5px;top:525px">0.30</div>
<div class="t" style="right:824.5px;top:525px">xauusd.s</div>
<div class="t" style="right:727.5px;top:525px">1802.14</div>
<div class="t" style="right:631.5px;top:525px">0.00</div>
<div class="t" style="right:533.5px;top:525px">0.00</div>
<div class="t" style="right:320.5px;top:525px">2021.12.21 17:48:17</div>
<div class="t" style="right:223.5px;top:525px">1786.07</div>
<div class="t" style="right:126.5px;top:525px">-1.50</div>
<div class="t" style="right:14.5px;top:525px">482.10</div>
<div class="a" style="left:18px;top:541px;width:1420px;height:21px;background:#ebebeb;border-bottom:1px solid #dcdcdc"></div>
<div class="a" style="left:143px;top:541px;width:1px;height:21px;background:#d2d2d2"></div>
<div class="a" style="left:355px;top:541px;width:1px;height:21px;background:#d2d2d2"></div>
<div class="a" style="left:453px;top:541px;width:1px;height:21px;background:#d2d2d2"></div>
<div class="a" style="left:530px;top:541px;width:1px;height:21px;background:#d2d2d2"></div>
<div class="a" style="left:628px;top:541px;width:1px;height:21px;background:#d2d2d2"></div>
<div class="a" style="left:725px;top:541px;width:1px;height:21px;background:#d2d2d2"></div>
<div class="a" style="left:821px;top:541px;width:1px;height:21px;background:#d2d2d2"></div>
<div class="a" style="left:919px;top:541px;width:1px;height:21px;background:#d2d2d2"></div>
<div class="a" style="left:1132px;top:541px;width:1px;height:21px;background:#d2d2d2"></div>
<div class="a" style="left:1229px;top:541px;width:1px;height:21px;background:#d2d2d2"></div>
<div class="a" style="left:1326px;top:541px;width:1px;height:21px;background:#d2d2d2"></div>
<svg class="a" style="left:21px;top:544px" width="14" height="16"><path d="M1.5 0.5h7l3 3v11h-10z" fill="#fff" stroke="#7a7a7a"/><circle cx="9.5" cy="12" r="3.6" fill="#e0522a" stroke="#a02a10" stroke-width="0.7"/></svg>
<div class="t" style="left:40px;top:546px">22184852</div>
<div class="t" style="right:1096.7px;top:546px">2021.12.17 04:20:38</div>
<div class="t" style="right:999.5px;top:546px">sell</div>
<div class="t" style="right:922.5px;top:546px">0.05</div>
<div class="t" style="right:824.5px;top:546px">xauusd.s</div>
<div class="t" style="right:727.5px;top:546px">1802.26</div>
<div class="t" style="right:631.5px;top:546px">0.00</div>
<div class="t" style="right:533.5px;top:546px">0.00</div>
<div class="t" style="right:320.5px;top:546px">2021.12.21 17:48:21</div>
<div class="t" style="right:223.5px;top:546px">1785.89</div>
<div class="t" style="right:126.5px;top:546px">-0.25</div>
<div class="t" style="right:14.5px;top:546px">81.85</div>
<div class="a" style="left:18px;top:562px;width:1420px;height:21px;background:#ffffff;border-bottom:1px solid #dcdcdc"></div>
<div class="a" style="left:143px;top:562px;width:1px;height:21px;background:#d2d2d2"></div>
<div class="a" style="left:355px;top:562px;width:1px;height:21px;background:#d2d2d2"></div>
<div class="a" style="left:453px;top:562px;width:1px;height:21px;background:#d2d2d2"></div>
<div class="a" style="left:530px;top:562px;width:1px;height:21px;background:#d2d2d2"></div>
<div class="a" style="left:628px;top:562px;width:1px;height:21px;background:#d2d2d2"></div>
<div class="a" style="left:725px;top:562px;width:1px;height:21px;background:#d2d2d2"></div>
<div class="a" style="left:821px;top:562px;width:1px;height:21px;background:#d2d2d2"></div>
<div class="a" style="left:919px;top:562px;width:1px;height:21px;background:#d2d2d2"></div>
<div class="a" style="left:1132px;top:562px;width:1px;height:21px;background:#d2d2d2"></div>
<div class="a" style="left:1229px;top:562px;width:1px;height:21px;background:#d2d2d2"></div>
<div class="a" style="left:1326px;top:562px;width:1px;height:21px;background:#d2d2d2"></div>
<svg class="a" style="left:21px;top:565px" width="14" height="16"><path d="M1.5 0.5h7l3 3v11h-10z" fill="#fff" stroke="#7a7a7a"/><circle cx="9.5" cy="12" r="3.6" fill="#e0522a" stroke="#a02a10" stroke-width="0.7"/></svg>
<div class="t" style="left:40px;top:567px">22184857</div>
<div class="t" style="right:1096.7px;top:567px">2021.12.17 04:21:00</div>
<div class="t" style="right:999.5px;top:567px">sell</div>
<div class="t" style="right:922.5px;top:567px">0.06</div>
<div class="t" style="right:824.5px;top:567px">xauusd.s</div>
<div class="t" style="right:727.5px;top:567px">1802.46</div>
<div class="t" style="right:631.5px;top:567px">0.00</div>
<div class="t" style="right:533.5px;top:567px">0.00</div>
<div class="t" style="right:320.5px;top:567px">2021.12.21 17:48:21</div>
<div class="t" style="right:223.5px;top:567px">1785.92</div>
<div class="t" style="right:126.5px;top:567px">-0.30</div>
<div class="t" style="right:14.5px;top:567px">99.24</div>
<div class="a" style="left:18px;top:583px;width:1420px;height:21px;background:#ebebeb;border-bottom:1px solid #dcdcdc"></div>
<div class="a" style="left:143px;top:583px;width:1px;height:21px;background:#d2d2d2"></div>
<div class="a" style="left:355px;top:583px;width:1px;height:21px;background:#d2d2d2"></div>
<div class="a" style="left:453px;top:583px;width:1px;height:21px;background:#d2d2d2"></div>
<div class="a" style="left:530px;top:583px;width:1px;height:21px;background:#d2d2d2"></div>
<div class="a" style="left:628px;top:583px;width:1px;height:21px;background:#d2d2d2"></div>
<div class="a" style="left:725px;top:583px;width:1px;height:21px;background:#d2d2d2"></div>
<div class="a" style="left:821px;top:583px;width:1px;height:21px;background:#d2d2d2"></div>
<div class="a" style="left:919px;top:583px;width:1px;height:21px;background:#d2d2d2"></div>
<div class="a" style="left:1132px;top:583px;width:1px;height:21px;background:#d2d2d2"></div>
<div class="a" style="left:1229px;top:583px;width:1px;height:21px;background:#d2d2d2"></div>
<div class="a" style="left:1326px;top:583px;width:1px;height:21px;background:#d2d2d2"></div>
<svg class="a" style="left:21px;top:586px" width="14" height="16"><path d="M1.5 0.5h7l3 3v11h-10z" fill="#fff" stroke="#7a7a7a"/><circle cx="9.5" cy="12" r="3.6" fill="#e0522a" stroke="#a02a10" stroke-width="0.7"/></svg>
<div class="t" style="left:40px;top:588px">22184860</div>
<div class="t" style="right:1096.7px;top:588px">2021.12.17 04:21:19</div>
<div class="t" style="right:999.5px;top:588px">sell</div>
<div class="t" style="right:922.5px;top:588px">0.07</div>
<div class="t" style="right:824.5px;top:588px">xauusd.s</div>
<div class="t" style="right:727.5px;top:588px">1802.60</div>
<div class="t" style="right:631.5px;top:588px">0.00</div>
<div class="t" style="right:533.5px;top:588px">0.00</div>
<div class="t" style="right:320.5px;top:588px">2021.12.21 17:48:21</div>
<div class="t" style="right:223.5px;top:588px">1785.92</div>
<div class="t" style="right:126.5px;top:588px">-0.35</div>
<div class="t" style="right:14.5px;top:588px">116.76</div>
<div class="a" style="left:18px;top:604px;width:1420px;height:21px;background:#ffffff;border-bottom:1px solid #dcdcdc"></div>
<div class="a" style="left:143px;top:604px;width:1px;height:21px;background:#d2d2d2"></div>
<div class="a" style="left:355px;top:604px;width:1px;height:21px;background:#d2d2d2"></div>
<div class="a" style="left:453px;top:604px;width:1px;height:21px;background:#d2d2d2"></div>
<div class="a" style="left:530px;top:604px;width:1px;height:21px;background:#d2d2d2"></div>
<div class="a" style="left:628px;top:604px;width:1px;height:21px;background:#d2d2d2"></div>
<div class="a" style="left:725px;top:604px;width:1px;height:21px;background:#d2d2d2"></div>
<div class="a" style="left:821px;top:604px;width:1px;height:21px;background:#d2d2d2"></div>
<div class="a" style="left:919px;top:604px;width:1px;height:21px;background:#d2d2d2"></div>
<div class="a" style="left:1132px;top:604px;width:1px;height:21px;background:#d2d2d2"></div>
<div class="a" style="left:1229px;top:604px;width:1px;height:21px;background:#d2d2d2"></div>
<div class="a" style="left:1326px;top:604px;width:1px;height:21px;background:#d2d2d2"></div>
<svg class="a" style="left:21px;top:607px" width="14" height="16"><path d="M1.5 0.5h7l3 3v11h-10z" fill="#fff" stroke="#7a7a7a"/><circle cx="9.5" cy="12" r="3.6" fill="#e0522a" stroke="#a02a10" stroke-width="0.7"/></svg>
<div class="t" style="left:40px;top:609px">22184864</div>
<div class="t" style="right:1096.7px;top:609px">2021.12.17 04:21:34</div>
<div class="t" style="right:999.5px;top:609px">sell</div>
<div class="t" style="right:922.5px;top:609px">0.08</div>
<div class="t" style="right:824.5px;top:609px">xauusd.s</div>
<div class="t" style="right:727.5px;top:609px">1802.60</div>
<div class="t" style="right:631.5px;top:609px">0.00</div>
<div class="t" style="right:533.5px;top:609px">0.00</div>
<div class="t" style="right:320.5px;top:609px">2021.12.21 17:48:19</div>
<div class="t" style="right:223.5px;top:609px">1785.87</div>
<div class="t" style="right:126.5px;top:609px">-0.40</div>
<div class="t" style="right:14.5px;top:609px">133.84</div>
<div class="a" style="left:18px;top:625px;width:1420px;height:21px;background:#ebebeb;border-bottom:1px solid #dcdcdc"></div>
<div class="a" style="left:143px;top:625px;width:1px;height:21px;background:#d2d2d2"></div>
<div class="a" style="left:355px;top:625px;width:1px;height:21px;background:#d2d2d2"></div>
<div class="a" style="left:453px;top:625px;width:1px;height:21px;background:#d2d2d2"></div>
<div class="a" style="left:530px;top:625px;width:1px;height:21px;background:#d2d2d2"></div>
<div class="a" style="left:628px;top:625px;width:1px;height:21px;background:#d2d2d2"></div>
<div class="a" style="left:725px;top:625px;width:1px;height:21px;background:#d2d2d2"></div>
<div class="a" style="left:821px;top:625px;width:1px;height:21px;background:#d2d2d2"></div>
<div class="a" style="left:919px;top:625px;width:1px;height:21px;background:#d2d2d2"></div>
<div class="a" style="left:1132px;top:625px;width:1px;height:21px;background:#d2d2d2"></div>
<div class="a" style="left:1229px;top:625px;width:1px;height:21px;background:#d2d2d2"></div>
<div class="a" style="left:1326px;top:625px;width:1px;height:21px;background:#d2d2d2"></div>
<svg class="a" style="left:21px;top:628px" width="14" height="16"><path d="M1.5 0.5h7l3 3v11h-10z" fill="#fff" stroke="#7a7a7a"/><circle cx="9.5" cy="12" r="3.6" fill="#e0522a" stroke="#a02a10" stroke-width="0.7"/></svg>
<div class="t" style="left:40px;top:630px">22184868</div>
<div class="t" style="right:1096.7px;top:630px">2021.12.17 04:22:07</div>
<div class="t" style="right:999.5px;top:630px">sell</div>
<div class="t" style="right:922.5px;top:630px">0.03</div>
<div class="t" style="right:824.5px;top:630px">xauusd.s</div>
<div class="t" style="right:727.5px;top:630px">1802.64</div>
<div class="t" style="right:631.5px;top:630px">0.00</div>
<div class="t" style="right:533.5px;top:630px">0.00</div>
<div class="t" style="right:320.5px;top:630px">2021.12.21 17:48:20</div>
<div class="t" style="right:223.5px;top:630px">1785.91</div>
<div class="t" style="right:126.5px;top:630px">-0.15</div>
<div class="t" style="right:14.5px;top:630px">50.19</div>
<svg class="a" style="left:0;top:416px" width="1449" height="373"><path transform="translate(0,-416)" fill-rule="evenodd" fill="rgba(0,0,0,0.045)" d="M60 445L152 436L304 591L376 412L560 412L542 439L466 524L400 573L332 615L297 648L249 615L183 573Z"/></svg>
<div class="a" style="left:18px;top:646px;width:1420px;height:21px;background:#c8c8c8"></div>
<svg class="a" style="left:23px;top:652px" width="10" height="10"><circle cx="5" cy="5" r="3.5" fill="none" stroke="#9a9a9a"/></svg>
<div class="t" style="left:40px;top:650px;font-weight:bold">盈/亏: 1 438.04</div>
<div class="t" style="left:134.5px;top:650px;font-weight:bold">信用额: 500.00</div>
<div class="t" style="left:223.4px;top:650px;font-weight:bold">存款: 1 000.00</div>
<div class="t" style="left:311px;top:650px;font-weight:bold">取款: 0.00</div>
<div class="t" style="right:15px;top:650px;font-weight:bold">2 438.04</div>
</div>
</body></html>
